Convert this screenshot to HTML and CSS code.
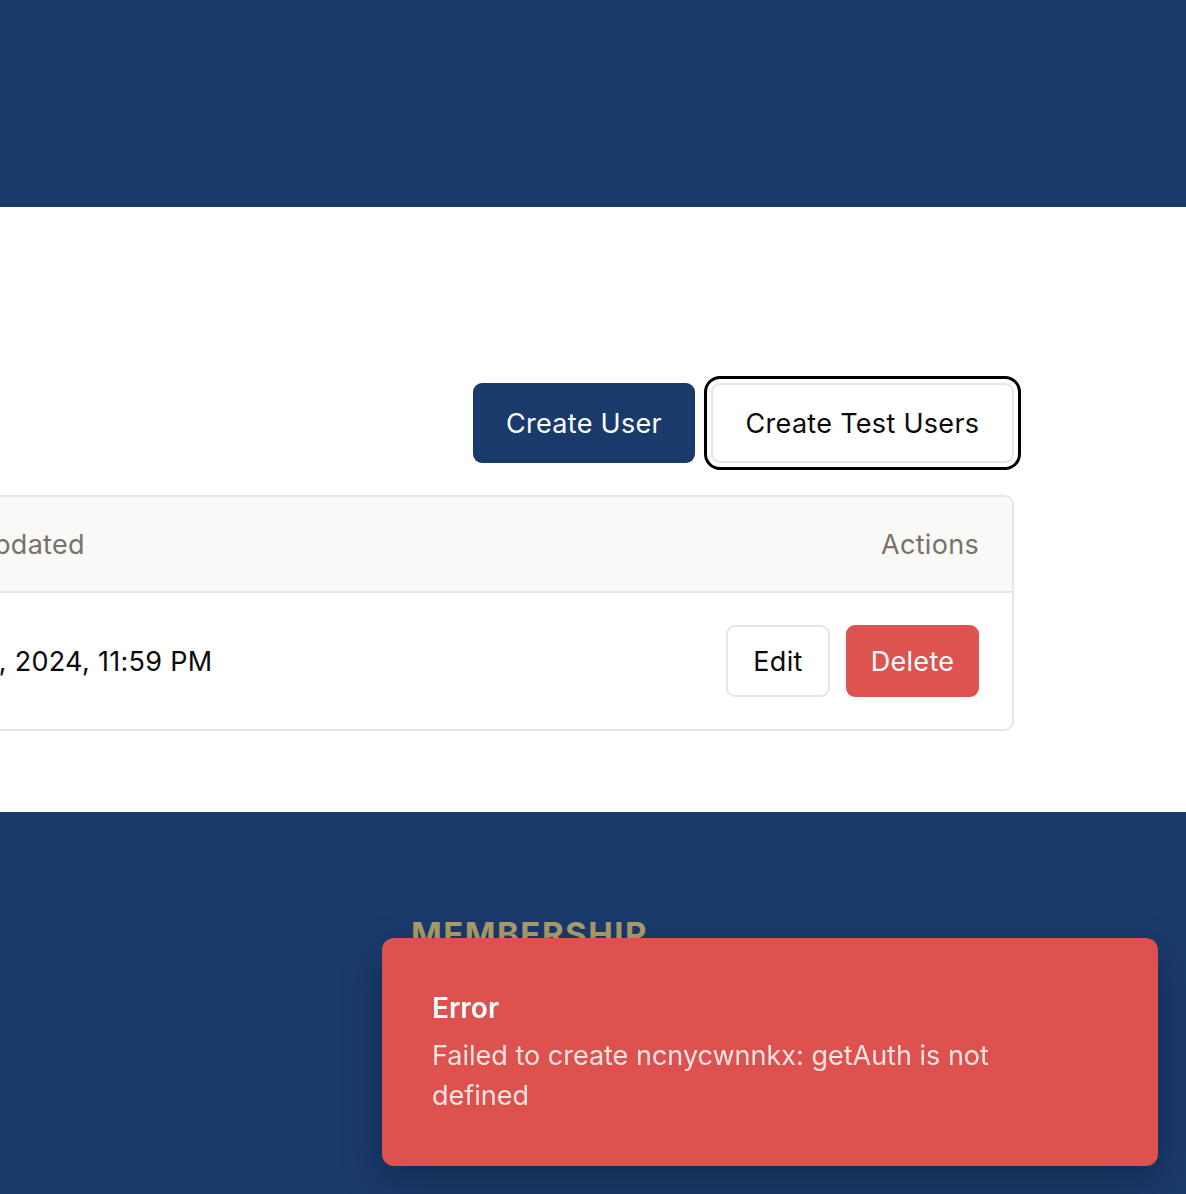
FILE: index.html
```html
<!DOCTYPE html>
<html lang="en">
<head>
<meta charset="utf-8">
<title>Users</title>
<link rel="stylesheet" href="styles.css">
</head>
<body>
<header class="site-header"></header>
<main class="main">
  <div class="content">
    <div class="toolbar">
      <button class="btn btn-primary">Create User</button>
      <button class="btn btn-outline btn-focused">Create Test Users</button>
    </div>
    <div class="table-card">
      <div class="table-head">
        <div class="cell-updated">Last Updated</div>
        <div class="cell-actions">Actions</div>
      </div>
      <div class="table-row">
        <div class="cell-updated">Dec 31, 2024, 11:59 PM</div>
        <div class="cell-actions">
          <button class="btn-sm btn-edit">Edit</button>
          <button class="btn-sm btn-delete">Delete</button>
        </div>
      </div>
    </div>
  </div>
</main>
<footer class="site-footer">
  <div class="footer-col">
    <h3 class="footer-title">MEMBERSHIP</h3>
  </div>
</footer>
<div class="toast" role="alert">
  <div class="toast-title">Error</div>
  <div class="toast-msg">Failed to create ncnycwnnkx: getAuth is not defined</div>
</div>
</body>
</html>
```
FILE: styles.css
```css
* { box-sizing: border-box; }
html, body { margin: 0; padding: 0; }
body {
  font-family: Inter, "Noto Sans", sans-serif;
  color: #0c0a09;
  background: #fff;
  overflow: hidden;
}
.site-header {
  height: 207px;
  background: #1a3a6c;
}
.main {
  height: 605px;
  padding-top: 176px;
}
.content {
  margin-left: -400px;
  margin-right: 172px;
}
.toolbar {
  display: flex;
  justify-content: flex-end;
  gap: 16px;
  margin-bottom: 32px;
}
.btn {
  font-family: inherit;
  font-size: 27px;
  letter-spacing: 0.3px;
  height: 80px;
  border-radius: 9px;
  padding: 0;
  cursor: pointer;
}
.btn-primary {
  background: #1a3a6c;
  color: #fff;
  border: none;
  width: 222px;
}
.btn-outline {
  background: #fff;
  color: #0c0a09;
  border: 2px solid #e5e5e5;
  width: 303px;
}
.btn-focused {
  outline: 3px solid #000;
  outline-offset: 4px;
}
.table-card {
  border: 2px solid #e6e6e6;
  border-radius: 10px;
  overflow: hidden;
}
.table-head {
  display: flex;
  justify-content: space-between;
  align-items: center;
  height: 96px;
  background: #f9f9f8;
  border-bottom: 2px solid #e6e6e6;
  padding: 0 33px 0 309px;
  font-size: 27px;
  letter-spacing: 0.3px;
  color: #78716c;
}
.table-row {
  display: flex;
  justify-content: space-between;
  align-items: center;
  height: 136px;
  padding: 0 33px 0 309px;
  font-size: 27px;
  letter-spacing: 0.3px;
}
.cell-actions {
  display: flex;
  gap: 16px;
}
.btn-sm {
  font-family: inherit;
  font-size: 27px;
  letter-spacing: 0.3px;
  height: 72px;
  border-radius: 9px;
  padding: 0;
}
.btn-edit {
  background: #fff;
  border: 2px solid #e5e5e5;
  color: #0c0a09;
  width: 104px;
}
.btn-delete {
  background: #dc5350;
  border: none;
  color: #fff;
  width: 133px;
}
.site-footer {
  height: 382px;
  background: #1a3a6c;
  padding: 102px 0 0 411px;
}
.footer-title {
  margin: 0;
  font-size: 33px;
  font-weight: 700;
  color: #aa9c68;
  letter-spacing: 1.5px;
  line-height: 40px;
}
.toast {
  position: fixed;
  right: 28px;
  bottom: 28px;
  width: 776px;
  height: 228px;
  background: #dd524e;
  border-radius: 12px;
  padding: 50px 50px 0 50px;
  color: #fff;
  box-shadow: 0 16px 40px rgba(0, 0, 0, 0.25);
}
.toast-title {
  font-size: 28px;
  font-weight: 600;
  line-height: 40px;
}
.toast-msg {
  font-size: 27px;
  line-height: 40px;
  margin-top: 8px;
  max-width: 620px;
  color: #fbe4e3;
}
```
